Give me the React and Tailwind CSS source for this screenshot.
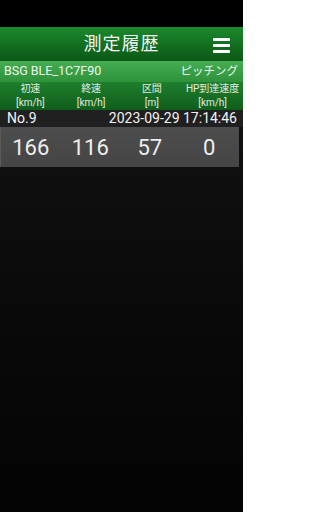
import React from 'react';

const COLUMNS = [
  { label: '初速', unit: '[km/h]' },
  { label: '終速', unit: '[km/h]' },
  { label: '区間', unit: '[m]' },
  { label: 'HP到達速度', unit: '[km/h]' },
];

const RECORDS = [
  { no: 9, at: '2023-09-29 17:14:46', values: [166, 116, 57, 0] },
];

export default function App() {
  return (
    <div
      className="w-[243px] h-[512px] flex flex-col overflow-hidden bg-gradient-to-b from-[#161616] to-[#040404] text-white"
      style={{ fontFamily: 'Roboto, "Noto Sans CJK JP", sans-serif' }}
    >
      {/* status bar */}
      <div className="h-[27px] bg-black shrink-0" />

      {/* title bar */}
      <div className="h-[34px] shrink-0 relative flex items-center justify-center bg-gradient-to-b from-[#1b8a2c] to-[#0c5817]">
        <span className="text-[18px] leading-none tracking-[1px] text-[#f4f4f4]">測定履歴</span>
        <div className="absolute right-[13px] top-[11px] flex flex-col gap-[3px]">
          <div className="w-[17px] h-[3px] rounded-[1px] bg-white" />
          <div className="w-[17px] h-[3px] rounded-[1px] bg-white" />
          <div className="w-[17px] h-[3px] rounded-[1px] bg-white" />
        </div>
      </div>

      {/* device bar */}
      <div className="h-[21px] shrink-0 flex items-center justify-between pl-[4px] pr-[5px] bg-gradient-to-b from-[#45ad52] to-[#2e923b] text-[12.5px] text-[#eef7ee]">
        <span>BSG BLE_1C7F90</span>
        <span className="text-[11.5px]">ピッチング</span>
      </div>

      {/* column headers */}
      <div className="h-[28px] shrink-0 grid grid-cols-4 items-center bg-gradient-to-b from-[#1e7f2c] to-[#0f5e1b] text-[10px] leading-[14px] text-[#e2ebe2]">
        {COLUMNS.map((c) => (
          <div key={c.label} className="flex flex-col items-center">
            <span>{c.label}</span>
            <span>{c.unit}</span>
          </div>
        ))}
      </div>

      {RECORDS.map((r) => (
        <div key={r.no}>
          <div className="h-[17px] flex items-center justify-between pl-[7px] pr-[6px] bg-[#202020] text-[14px] text-[#f2f2f2]">
            <span>No.{r.no}</span>
            <span>{r.at}</span>
          </div>
          <div className="h-[40px] mr-[4px] grid grid-cols-4 items-center bg-gradient-to-b from-[#4d4d4d] to-[#454545] border-l border-[#5a5a5a] text-[22px] text-[#eeeeee]">
            {r.values.map((v, i) => (
              <span key={i} className="text-center">{v}</span>
            ))}
          </div>
        </div>
      ))}
    </div>
  );
}
